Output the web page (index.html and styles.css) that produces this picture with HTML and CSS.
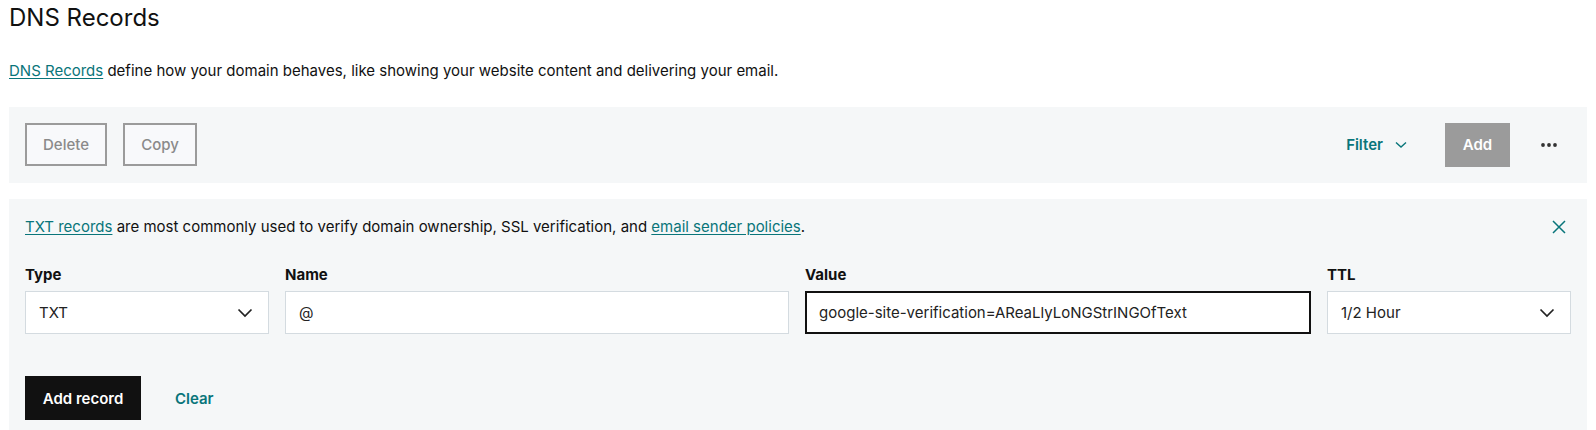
FILE: index.html
```html
<!DOCTYPE html>
<html lang="en">
<head>
<meta charset="utf-8">
<title>DNS Records</title>
<link rel="stylesheet" href="styles.css">
</head>
<body>
<h1 class="title">DNS Records</h1>
<p class="intro"><a href="#" class="link">DNS Records</a> define how your domain behaves, like showing your website content and delivering your email.</p>

<div class="toolbar">
  <div class="toolbar-left">
    <button class="btn-outline">Delete</button>
    <button class="btn-outline">Copy</button>
  </div>
  <div class="toolbar-right">
    <button class="btn-filter">Filter
      <svg class="filter-chevron" width="12" height="8" viewBox="0 0 12 8"><path d="M1 1.5 L6 6 L11 1.5" fill="none" stroke="currentColor" stroke-width="1.4"/></svg>
    </button>
    <button class="btn-add">Add</button>
    <button class="btn-more" aria-label="More">
      <svg width="18" height="6" viewBox="0 0 18 6"><circle cx="3" cy="3" r="1.9" fill="#333"/><circle cx="9" cy="3" r="1.9" fill="#333"/><circle cx="15" cy="3" r="1.9" fill="#333"/></svg>
    </button>
  </div>
</div>

<div class="form-panel">
  <div class="info-row">
    <p class="info"><a href="#" class="link">TXT records</a> are most commonly used to verify domain ownership, SSL verification, and <a href="#" class="link">email sender policies</a>.</p>
    <button class="btn-close" aria-label="Close">
      <svg width="16" height="16" viewBox="0 0 16 16"><path d="M2 2 L14 14 M14 2 L2 14" fill="none" stroke="#09757a" stroke-width="1.5"/></svg>
    </button>
  </div>
  <div class="fields">
    <div class="field">
      <label class="label">Type</label>
      <div class="input select"><span>TXT</span>
        <svg width="16" height="10" viewBox="0 0 16 10"><path d="M1.5 1.5 L8 8 L14.5 1.5" fill="none" stroke="#222" stroke-width="1.7"/></svg>
      </div>
    </div>
    <div class="field">
      <label class="label">Name</label>
      <div class="input"><span>@</span></div>
    </div>
    <div class="field">
      <label class="label">Value</label>
      <div class="input focused"><span>google-site-verification=AReaLlyLoNGStrINGOfText</span></div>
    </div>
    <div class="field">
      <label class="label">TTL</label>
      <div class="input select"><span>1/2 Hour</span>
        <svg width="16" height="10" viewBox="0 0 16 10"><path d="M1.5 1.5 L8 8 L14.5 1.5" fill="none" stroke="#222" stroke-width="1.7"/></svg>
      </div>
    </div>
  </div>
  <div class="actions">
    <button class="btn-primary">Add record</button>
    <button class="btn-clear">Clear</button>
  </div>
</div>
</body>
</html>
```

FILE: styles.css
```css
* { box-sizing: border-box; }
body {
  margin: 0;
  padding: 0 9px;
  font-family: Inter, "Liberation Sans", sans-serif;
  color: #111;
  background: #fff;
}
.title {
  margin: 0;
  padding-top: 3px;
  font-size: 24px;
  font-weight: 400;
  line-height: 30px;
}
.intro {
  margin: 28px 0 0 0;
  font-size: 15px;
  line-height: 20px;
}
.link {
  color: #09757a;
  text-decoration: underline;
  text-underline-offset: 2px;
}
.toolbar {
  margin-top: 26px;
  background: #f5f7f8;
  height: 76px;
  padding: 16px 16px 17px 16px;
  display: flex;
  justify-content: space-between;
  align-items: center;
}
.toolbar-left { display: flex; gap: 16px; }
.toolbar-right { display: flex; align-items: center; }
button { font-family: inherit; cursor: pointer; }
.btn-outline {
  height: 43px;
  padding: 0 16px;
  background: #f8f9fb;
  border: 2px solid #9b9b9b;
  color: #8a8a8a;
  font-size: 15px;
  font-weight: 500;
}
.btn-outline:first-child { width: 82px; }
.btn-outline:last-child { width: 74px; }
.btn-filter {
  background: none;
  border: none;
  color: #09757a;
  font-size: 15px;
  font-weight: 600;
  display: flex;
  align-items: center;
  gap: 12px;
  padding: 0;
  margin-right: 38px;
}
.filter-chevron { margin-top: 1px; }
.btn-add {
  width: 65px;
  height: 44px;
  background: #9b9b9b;
  border: none;
  color: #fff;
  font-size: 15px;
  font-weight: 600;
}
.btn-more {
  background: none;
  border: none;
  padding: 0;
  margin-left: 30px;
  margin-right: 13px;
  display: flex;
}
.form-panel {
  margin-top: 16px;
  background: #f5f7f8;
  padding: 16px 16px 16px 16px;
}
.info-row {
  display: flex;
  justify-content: space-between;
  align-items: center;
  height: 24px;
}
.info {
  margin: 0;
  font-size: 15px;
  line-height: 24px;
}
.btn-close {
  background: none;
  border: none;
  padding: 0;
  display: flex;
  margin-right: 4px;
}
.fields {
  margin-top: 26px;
  display: grid;
  grid-template-columns: 244fr 504fr 506fr 244fr;
  gap: 16px;
}
.field { display: flex; flex-direction: column; gap: 6px; }
.label {
  font-size: 15px;
  font-weight: 700;
  line-height: 20px;
}
.input {
  height: 43px;
  background: #fff;
  border: 1px solid #d4dbe0;
  display: flex;
  align-items: center;
  justify-content: space-between;
  padding: 0 13px 0 13px;
  font-size: 15px;
  color: #222;
}
.input.focused {
  border: 2px solid #111;
  padding-left: 12px;
}
.select { padding-right: 15px; }
.actions {
  margin-top: 42px;
  display: flex;
  align-items: center;
  gap: 34px;
}
.btn-primary {
  width: 116px;
  height: 44px;
  background: #111;
  color: #fff;
  border: none;
  font-size: 15px;
  font-weight: 600;
}
.btn-clear {
  background: none;
  border: none;
  padding: 0;
  color: #09757a;
  font-size: 15px;
  font-weight: 600;
}
```
